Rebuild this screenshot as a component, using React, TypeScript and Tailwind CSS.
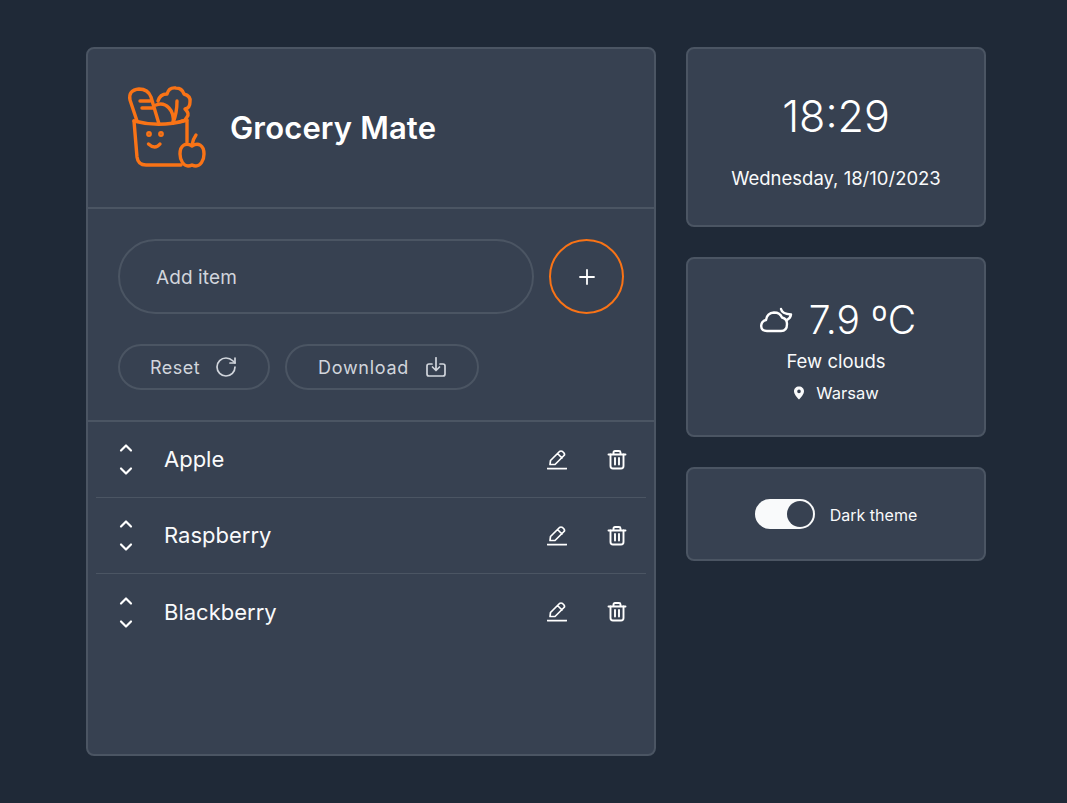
import * as React from "react";
import { ChevronUp, ChevronDown, Plus, RotateCw } from "lucide-react";

const items = ["Apple", "Raspberry", "Blackberry"];

const Logo = () => (
  <svg width="110" height="110" viewBox="0 0 110 110" fill="none" stroke="#f97316" strokeWidth="3.4" strokeLinecap="round" strokeLinejoin="round" className="shrink-0 -mt-[8px]">
    <path d="M24 52 Q50 59 77 51" />
    <path d="M24 52 L27 88 Q28 96 36 96 L71 96" />
    <path d="M77 52 L77 73" />
    <path d="M27 52 L20 31 Q18 21 29 20 Q38 20 41 28 L49 55" />
    <path d="M30 32 L40 32 M32 39 L43 39" />
    <path d="M46 36 C56 32 65 42 63 54" />
    <path d="M48 32 Q50 25 57 25 Q59 18 66 19 Q72 19 74 25 Q81 27 80 33 Q80 39 75 40 Q80 45 77 48 Q75 52 72 52" />
    <path d="M67 32 Q67 44 63 54" />
    <circle cx="39" cy="65" r="1.2" />
    <circle cx="51" cy="65" r="1.2" />
    <path d="M38.5 75 Q45 81 50 75" />
    <path d="M82 77 C76 73 70 76 70 85 C70 92 74 97 78 97 Q80 97 82 96 Q84 97 86 97 C90 97 94 92 94 85 C94 76 88 73 82 77 Z" />
    <path d="M82 76 Q83 70 86 66" />
  </svg>
);

const EditIcon = () => (
  <svg width="20" height="20" viewBox="0 0 20 20" fill="none" stroke="currentColor" strokeWidth="1.7" strokeLinejoin="round" strokeLinecap="round">
    <path d="M3 14.5 L3.5 10.5 L12.5 1.5 Q14 0.5 15.5 1.5 L17 3 Q18 4.5 17 5.5 L8 14.5 Z M10.5 3.5 L15 8" />
    <path d="M0.5 18.6 L19.5 18.6" />
  </svg>
);

const TrashIcon = () => (
  <svg width="20" height="20" viewBox="0 0 20 20" fill="none" stroke="currentColor" strokeWidth="1.9" strokeLinejoin="round" strokeLinecap="round">
    <path d="M1.5 4.5 L18.5 4.5 M6.5 4.5 L6.5 2.5 Q6.5 1 8 1 L12 1 Q13.5 1 13.5 2.5 L13.5 4.5" />
    <path d="M3.5 4.5 L3.5 16 Q3.5 18.5 6 18.5 L14 18.5 Q16.5 18.5 16.5 16 L16.5 4.5" />
    <path d="M8 8 L8 14.5 M12 8 L12 14.5" />
  </svg>
);

const DownloadIcon = () => (
  <svg width="20" height="20" viewBox="0 0 20 20" fill="none" stroke="currentColor" strokeWidth="1.7" strokeLinejoin="round" strokeLinecap="round">
    <path d="M6 7 L3 7 Q1 7 1 9 L1 17 Q1 19 3 19 L17 19 Q19 19 19 17 L19 9 Q19 7 17 7 L14 7" />
    <path d="M10 0.8 L10 13 M6.5 10 L10 13.5 L13.5 10" />
  </svg>
);

const CloudMoonIcon = () => (
  <svg width="33" height="26" viewBox="0 0 33 26" fill="none" stroke="currentColor" strokeWidth="2.4" strokeLinejoin="round" strokeLinecap="round">
    <path d="M7 24 Q1 24 1.2 18.5 Q1.5 14 6 13 Q7 6 14 5.5 Q20 5.5 22 10.5 Q27 11.5 27 17 Q27 24 21 24 Z" />
    <path d="M21 2 Q22 7 31 7.5 Q30.5 11 27 13" />
  </svg>
);

export default function App() {
  return (
    <div className="min-h-[803px] bg-[#1f2937] pl-[86px] pt-[47px] flex items-start gap-[30px] font-['Inter',sans-serif] text-gray-50">
      <main className="w-[570px] h-[709px] bg-[#374151] border-2 border-[#4b5563] rounded-lg shrink-0">
        <header className="h-[160px] flex items-center gap-[10px] pl-[22px] border-b-2 border-[#4b5563]">
          <Logo />
          <h1 className="text-[31px] font-semibold text-white tracking-[0.15px]">Grocery Mate</h1>
        </header>

        <section className="px-[30px] pt-[30px] h-[213px] border-b-2 border-[#4b5563]">
          <div className="flex gap-[15px]">
            <div className="w-[416px] h-[75px] pt-[3px] rounded-full border-2 border-[#4b5563] flex items-center pl-[36px] text-[19px] tracking-[0.1px] text-gray-300">
              Add item
            </div>
            <button className="w-[75px] h-[75px] rounded-full border-2 border-[#f97316] flex items-center justify-center text-white">
              <Plus size={24} strokeWidth={1.8} />
            </button>
          </div>
          <div className="flex gap-[15px] mt-[30px]">
            <button className="w-[152px] h-[46px] rounded-full border-2 border-[#4b5563] flex items-center justify-center gap-[14px] text-[18px] tracking-[0.5px] text-gray-300">
              Reset
              <RotateCw size={24} strokeWidth={1.7} />
            </button>
            <button className="w-[194px] h-[46px] rounded-full border-2 border-[#4b5563] flex items-center justify-center gap-[17px] text-[18px] tracking-[0.7px] text-gray-300">
              Download
              <DownloadIcon />
            </button>
          </div>
        </section>

        <ul className="px-[8px]">
          {items.map((item, i) => (
            <li key={item} className={`h-[76px] flex items-center pl-[20px] pr-[19px] ${i < items.length - 1 ? "border-b border-[#4b5563]" : ""}`}>
              <div className="w-[20px] flex flex-col items-center text-white gap-[3px]">
                <ChevronUp size={20} strokeWidth={2.6} />
                <ChevronDown size={20} strokeWidth={2.6} />
              </div>
              <span className="ml-[28px] flex-1 text-[22px] text-gray-50">{item}</span>
              <div className="flex items-center gap-[40px] text-white">
                <EditIcon />
                <TrashIcon />
              </div>
            </li>
          ))}
        </ul>
      </main>

      <aside className="w-[300px] flex flex-col gap-[30px]">
        <div className="h-[180px] pt-[4px] bg-[#374151] border-2 border-[#4b5563] rounded-lg flex flex-col items-center justify-center">
          <div className="text-[43px] leading-[60px] font-light text-white">18:29</div>
          <div className="mt-[19px] text-[18.5px] text-gray-50">Wednesday, 18/10/2023</div>
        </div>
        <div className="h-[180px] pt-[7px] bg-[#374151] border-2 border-[#4b5563] rounded-lg flex flex-col items-center justify-center">
          <div className="flex items-center gap-[16px] ml-[4px] text-white">
            <CloudMoonIcon />
            <span className="text-[39px] leading-[48px] font-light">7.9 ºC</span>
          </div>
          <div className="text-[18.5px] mt-[4px] text-gray-50">Few clouds</div>
          <div className="flex items-center gap-[11px] mt-[5px] text-[16.5px] text-gray-50">
            <svg width="12" height="14" viewBox="0 0 12 14" fill="currentColor">
              <path fillRule="evenodd" d="M6 0.5 C9 0.5 11 2.6 11 5.3 C11 8.2 8 11.5 6 13.5 C4 11.5 1 8.2 1 5.3 C1 2.6 3 0.5 6 0.5 Z M6 3.6 A1.8 1.8 0 1 0 6 7.2 A1.8 1.8 0 1 0 6 3.6 Z" />
            </svg>
            Warsaw
          </div>
        </div>
        <div className="h-[94px] bg-[#374151] border-2 border-[#4b5563] rounded-lg flex items-center justify-center gap-[15px]">
          <div className="w-[60px] h-[30px] rounded-full bg-gray-50 flex items-center justify-end pr-[2px]">
            <div className="w-[26px] h-[26px] rounded-full bg-[#374151]" />
          </div>
          <span className="text-[16px] pt-[2px] text-gray-50">Dark theme</span>
        </div>
      </aside>
    </div>
  );
}
